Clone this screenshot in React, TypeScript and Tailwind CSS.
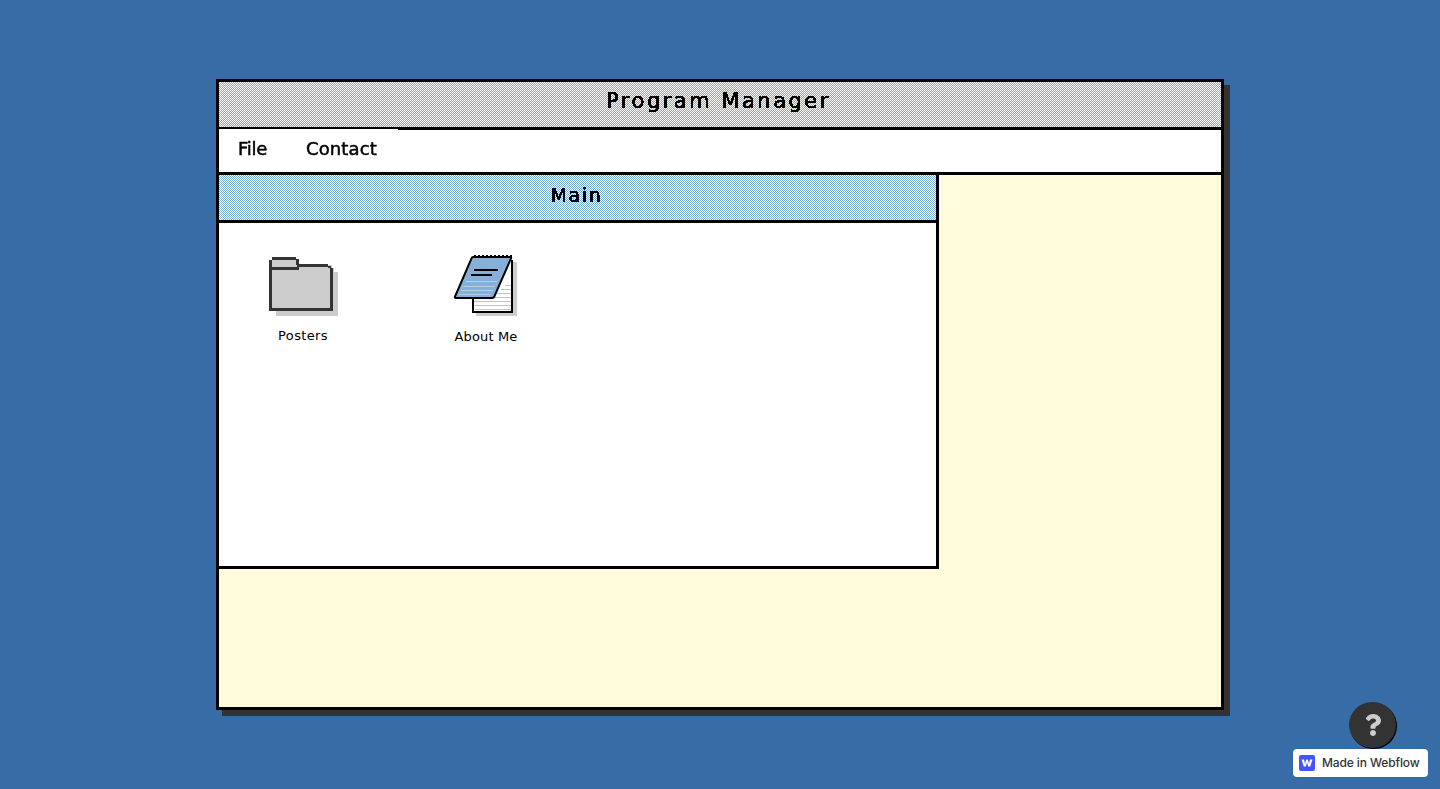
import { FaQuestion } from "react-icons/fa";

const checker =
  "bg-[conic-gradient(#ffffff_25%,#7aaedd_0_50%,#ffffff_0_75%,#7aaedd_0)] bg-[length:2px_2px]";

const FolderIcon = () => (
  <svg width="72" height="62" viewBox="0 0 72 62" shapeRendering="crispEdges" className="block">
    <g transform="translate(1 0)">
      <path d="M8 17H70V61H8Z" fill="#cccccc" />
      <path d="M2 5H30V10H64V13H66V56H2Z" fill="#cccccc" />
      <g fill="#333333">
        <rect x="4" y="2" width="24" height="3" />
        <rect x="1" y="5" width="3" height="4" />
        <rect x="28" y="4" width="3" height="6" />
        <rect x="1" y="12" width="30" height="3" />
        <rect x="29" y="9" width="31" height="3" />
        <rect x="60" y="11" width="3" height="2" />
        <rect x="62" y="13" width="3" height="41" />
        <rect x="1" y="8" width="3" height="46" />
        <rect x="1" y="53" width="64" height="3" />
      </g>
    </g>
  </svg>
);

const NotepadIcon = () => (
  <svg width="72" height="62" viewBox="0 0 72 62" shapeRendering="crispEdges" className="block">
    <rect x="26" y="7" width="41" height="54" fill="#cccccc" />
    <rect x="22" y="4" width="41" height="53" fill="#ffffff" />
    <g fill="#c4c4c4">
      <rect x="24" y="46" width="38" height="1" />
      <rect x="25" y="50" width="37" height="1" />
      <rect x="25" y="54" width="37" height="1" />
      <rect x="43" y="42" width="19" height="1" />
      <rect x="47" y="38" width="15" height="1" />
      <rect x="51" y="34" width="11" height="1" />
      <rect x="55" y="30" width="7" height="1" />
    </g>
    <g fill="#000000">
      <rect x="61" y="5" width="2" height="52" />
      <rect x="22" y="43" width="2" height="14" />
      <rect x="22" y="56" width="41" height="2" />
    </g>
    <path
      d="M23 2H60Q61.5 2 61 3.5L44.5 41Q44 43 42 43H6Q4.5 43 5 41.5L21.5 3.5Q22 2 23 2Z"
      fill="#86afd9"
      stroke="#000000"
      strokeWidth="2"
      shapeRendering="geometricPrecision"
    />
    <g fill="#b5cfe8">
      <rect x="16" y="26" width="31" height="1" />
      <rect x="13" y="31" width="32" height="1" />
      <rect x="11" y="35" width="32" height="1" />
      <rect x="9" y="39" width="32" height="1" />
    </g>
    <rect x="24" y="14" width="24" height="2" fill="#000000" />
    <rect x="21" y="19" width="21" height="2" fill="#000000" />
    <g fill="#000000">
      {[24, 28, 32, 36, 40, 44, 48, 52, 56, 60].map((x) => (
        <rect key={x} x={x} y="0" width="2" height="2" />
      ))}
    </g>
  </svg>
);

const DesktopItem = ({ label, labelClass, children }: { label: string; labelClass: string; children: React.ReactNode }) => (
  <div className="flex w-[100px] flex-col items-center">
    {children}
    <span className={`text-[13px] leading-[16px] text-black font-['DejaVu_Sans',sans-serif] ${labelClass}`}>
      {label}
    </span>
  </div>
);

export default function App() {
  return (
    <div className="relative h-screen overflow-hidden bg-[#386ca6] pt-[79px] font-['DejaVu_Sans',sans-serif]">
      <svg width="0" height="0" className="absolute">
        <filter id="crisp">
          <feComponentTransfer>
            <feFuncA type="discrete" tableValues="0 0 1 1" />
          </feComponentTransfer>
        </filter>
      </svg>

      <div className="mx-auto flex h-[631px] w-[1008px] flex-col border-[3px] border-black bg-[#fffbdb] shadow-[6px_6px_0_#333333]">
        <div className={`flex h-[48px] shrink-0 items-center justify-center border-b-[3px] border-black pb-[5px] pr-[3px] ${checker}`}>
          <h1 className="text-[21px] font-normal tracking-[2.5px] text-black [-webkit-text-stroke:0.7px_black] [filter:url(#crisp)]">
            Program Manager
          </h1>
        </div>

        <div className="flex h-[45px] shrink-0 border-b-[3px] border-black bg-white">
          <div className="-mt-px flex h-[43px] bg-white pb-[4px] text-[18px] tracking-[0.15px] text-black [-webkit-text-stroke:0.5px_black] [filter:url(#crisp)]">
            <span className="flex items-center pl-[19px] pr-[20px] tracking-[-0.3px]">File</span>
            <span className="flex items-center pl-[19px] pr-[21px]">Contact</span>
          </div>
        </div>

        <div className="flex h-[394px] w-[720px] shrink-0 flex-col border-r-[3px] border-b-[3px] border-black bg-white">
          <div className={`flex h-[48px] shrink-0 items-center justify-center border-b-[3px] border-black pb-[5px] pr-[2px] ${checker}`}>
            <h2 className="text-[19px] font-normal tracking-[1.6px] text-black [-webkit-text-stroke:0.6px_black] [filter:url(#crisp)]">
              Main
            </h2>
          </div>
          <div className="flex gap-[83px] pl-[34px] pt-[32px]">
            <DesktopItem label="Posters" labelClass="mt-[11px] tracking-[0.35px]">
              <FolderIcon />
            </DesktopItem>
            <DesktopItem label="About Me" labelClass="mt-[12px] tracking-[0.15px]">
              <NotepadIcon />
            </DesktopItem>
          </div>
        </div>
      </div>

      <div className="absolute left-[1349px] top-[702px] flex h-[46px] w-[47px] items-center justify-center rounded-full bg-[#333333] shadow-[1px_1px_0_#000000]">
        <FaQuestion className="text-[22px] text-[#cccccc]" />
      </div>

      <div className="absolute left-[1293px] top-[749px] flex h-[28px] w-[135px] items-center gap-[7px] rounded-[4px] bg-white pl-[6px] shadow-[0_0_1px_rgba(0,0,0,0.2)]">
        <svg width="16" height="16" viewBox="0 0 16 16" className="block">
          <rect width="16" height="16" rx="2" fill="#4353ff" />
          <path d="M2.5 4.5H5L6 8.8L7.2 4.5H8.8L10 8.8L11 4.5H13.5L11.2 11.5H9.2L8 7.6L6.8 11.5H4.8Z" fill="#ffffff" />
        </svg>
        <span className="text-[12px] font-medium leading-none tracking-[-0.01em] text-[#333333] font-['Inter',sans-serif]">
          Made in Webflow
        </span>
      </div>
    </div>
  );
}
